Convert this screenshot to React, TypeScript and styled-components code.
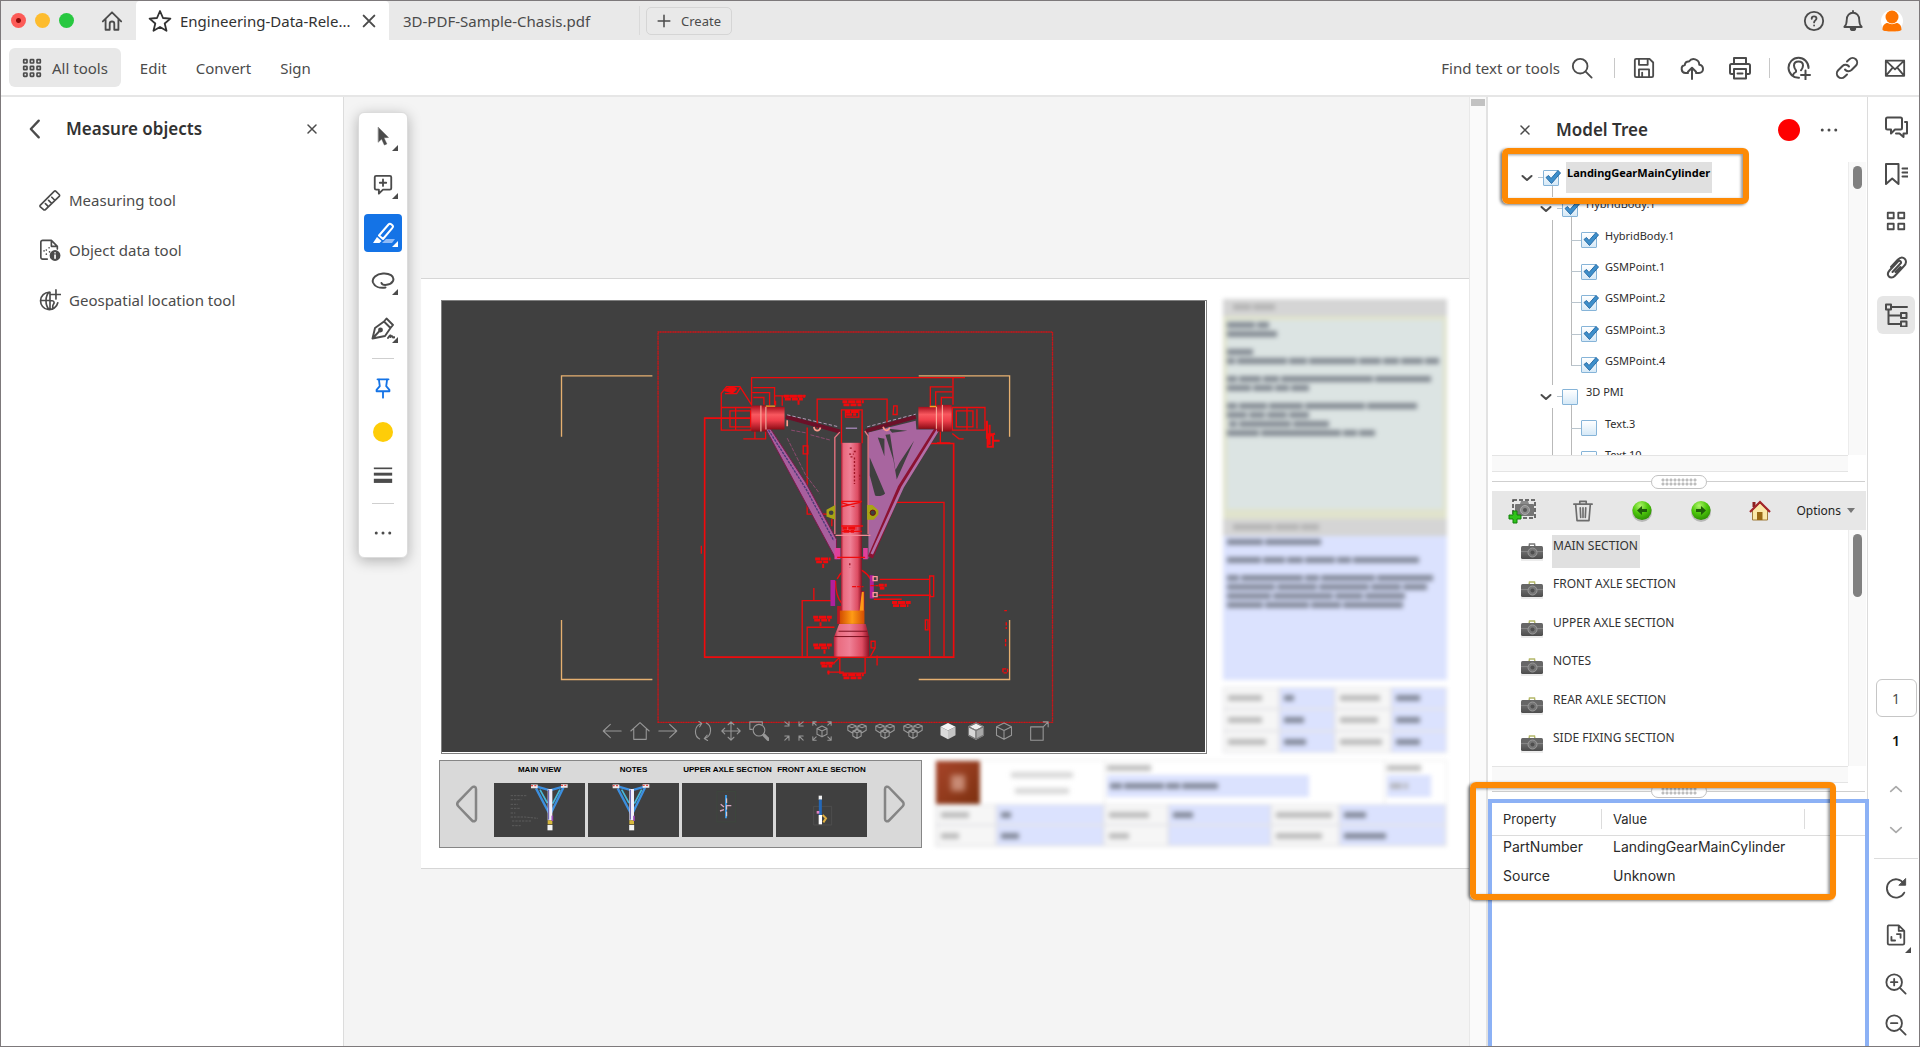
import React from "react";
import styled, { createGlobalStyle, css } from "styled-components";

const Global = createGlobalStyle`
  *, *::before, *::after { box-sizing: border-box; }
  body { margin: 0; font-family: "Noto Sans", "Open Sans", sans-serif; font-size: 15px; line-height: 20px; color: #4b4b4b; }
  button, input { font: inherit; color: inherit; }
  button { background: none; border: 0; padding: 0; cursor: pointer; }
  ul { list-style: none; margin: 0; padding: 0; }
  h2 { margin: 0; }
`;

/* ---------- icons ---------- */

type GlyphProps = { size?: number; sw?: number; box?: number; children: React.ReactNode };

const GlyphSvg = styled.svg`
  display: block;
  flex: none;
  fill: none;
  stroke: currentColor;
  stroke-linecap: round;
  stroke-linejoin: round;
`;

const Glyph = ({ size = 22, sw = 2, box = 24, children }: GlyphProps) => (
  <GlyphSvg width={size} height={size} viewBox={`0 0 ${box} ${box}`} strokeWidth={sw} aria-hidden="true">
    {children}
  </GlyphSvg>
);

const HomeIcon = () => (
  <Glyph size={22}><path d="M2 12.5 12 2.5l10 10M5 10v11.5h4.5V15a2.5 2.5 0 0 1 5 0v6.5H19V10" /></Glyph>
);
const StarIcon = () => (
  <Glyph size={24} sw={1.8}><path d="m12 2 3 7 7.4.6-5.7 4.9 1.8 7.3L12 17.9l-6.5 3.9 1.8-7.3L1.6 9.6 9 9z" /></Glyph>
);
const CrossIcon = ({ size = 16, sw = 3 }: { size?: number; sw?: number }) => (
  <Glyph size={size} sw={sw}><path d="M4 4l16 16M20 4 4 20" /></Glyph>
);
const PlusIcon = () => <Glyph size={14} sw={2.6}><path d="M12 2v20M2 12h20" /></Glyph>;
const HelpIcon = () => (
  <Glyph size={22}><circle cx="12" cy="12" r="10" /><path d="M9.5 9.5c0-1.5 1-2.5 2.6-2.5s2.6 1 2.6 2.3c0 2-2.6 2-2.6 4.2" /><path d="M12.1 16.8v.2" /></Glyph>
);
const BellIcon = () => (
  <Glyph size={22}><path d="M2.5 18.5h19c-2.5-2.5-2.7-4-2.7-8 0-4.5-3-7.500-6.800-7.500s-6.800 3-6.800 7.500c0 4-.2 5.500-2.700 8zM12 1v2" /><path d="M9.500 19.500a2.500 2.500 0 0 0 5 0z" fill="currentColor" /></Glyph>
);
const AvatarIcon = () => (
  <GlyphSvg width="22" height="22" viewBox="0 0 22 22" aria-hidden="true">
    <circle cx="11" cy="11" r="11" fill="#fff" stroke="none" />
    <circle cx="11" cy="7" r="6.5" fill="#fd7400" stroke="none" />
    <path d="M1.5 20c0-5 2.5-7 5-7 2.500 1.500 6.500 1.500 9 0 2.500 0 5 2 5 7-2 2-17 2-19 0z" fill="#fd7400" stroke="none" />
  </GlyphSvg>
);
const GridDots = () => (
  <Glyph size={20} sw={2}>
    {[2, 10, 18].map((y) => [2, 10, 18].map((x) => <rect key={`${x}-${y}`} x={x} y={y} width="4" height="4" rx=".6" />))}
  </Glyph>
);
const SearchIcon = () => <Glyph size={22}><circle cx="10" cy="10" r="8" /><path d="m16 16 6.5 6.5" /></Glyph>;
const SaveIcon = () => (
  <Glyph size={22}><path d="M2 3.5A1.5 1.5 0 0 1 3.5 2H18l4 4v14.500a1.500 1.500 0 0 1-1.500 1.500h-17A1.500 1.500 0 0 1 2 20.500zM6.500 2v6.500H16V2M6.500 22v-8.500h11V22M10 17v4" /></Glyph>
);
const CloudIcon = () => (
  <Glyph size={24}><path d="M8 17H5.500a4 4 0 0 1-.7-7.900C4.800 6.500 7 5 9 5.500a5.700 5.700 0 0 1 10.300 3.200C21.500 9 23 10.800 23 13s-1.700 4-4 4h-3M12 23V12m-4 3.800 4-4 4 4" /></Glyph>
);
const PrintIcon = () => (
  <Glyph size={24}><path d="M6 8V2h12v6M6 18H3.500A1.500 1.500 0 0 1 2 16.500v-7A1.500 1.500 0 0 1 3.500 8h17A1.500 1.500 0 0 1 22 9.500v7a1.500 1.500 0 0 1-1.500 1.500H18M6 13h12v9.500H6zM9.500 17.500h5" /></Glyph>
);
const AddUserIcon = () => (
  <Glyph size={24}><path d="M21.500 12A10 10 0 1 0 12 21.800M6 19c.5-2 1.500-2.500 3-3.200v-1.500C7.500 12.500 7 11 7 9.500 7 7 8.800 5.500 11.500 5.500S16 7 16 9.500c0 1.500-.5 3-2 4.800M18.500 14.500v9M14 19h9" /></Glyph>
);
const LinkIcon = () => (
  <Glyph size={24}><path d="M10 13.500a4.500 4.500 0 0 0 6.500.5l4.300-4.300a4.500 4.500 0 0 0-6.400-6.400L12 5.500M14 10.500a4.500 4.500 0 0 0-6.500-.5l-4.300 4.300a4.500 4.500 0 0 0 6.400 6.400L12 18.500" /></Glyph>
);
const MailIcon = () => (
  <Glyph size={22}><path d="M2 4h20v16.500H2zM2 4l10 9.500L22 4M2 20.500l7.500-9M22 20.500l-7.500-9" /></Glyph>
);
const BackIcon = () => <Glyph size={20} sw={2.8}><path d="M16.500 2 7 12l9.500 10" /></Glyph>;
const RulerIcon = () => (
  <Glyph size={22} sw={1.8}><path d="M1.500 17.500 16.500 2.500a1.500 1.500 0 0 1 2 0l3.500 3.500a1.500 1.500 0 0 1 0 2L7 22.500c-.5.5-1.500.5-2 0L1.500 19.500a1.500 1.500 0 0 1 0-2zM7 16l3 3M10.500 12.500l3 3M14 9l3 3" /></Glyph>
);
const ObjectDataIcon = () => (
  <Glyph size={22} sw={1.8}>
    <path d="M9 22H4a2 2 0 0 1-2-2V3.500a2 2 0 0 1 2-2h9.500L20 8v3M13.500 1.500V8H20M8 12v.1M11 9.500v.1M5.500 13v.1M8 16.500v.1M11.500 14v.1" />
    <circle cx="17.5" cy="18" r="5" fill="currentColor" /><path d="M17.500 17.500v3.500M17.500 15v.1" stroke="#fff" />
  </Glyph>
);
const GeoIcon = () => (
  <Glyph size={22} sw={1.8}><path d="M11 3.500A9.500 9.500 0 1 0 20.500 15M11 3.500C6.500 8 6.500 17.500 11 22.500M12 3.500v19M2 12.500h10c4 0 4.500 1 4.500 2.500-.5 2-1.500 2-1.500 4v3M18.500 1v10M13.500 6h10" /></Glyph>
);
const CornerMark = styled.span`
  position: absolute;
  right: 4px;
  bottom: 5px;
  border-left: 6px solid transparent;
  border-bottom: 6px solid currentColor;
`;
const PointerIcon = () => (
  <Glyph size={22} sw={0.5}><path d="M7 1.500 18 12.500l-5 .4 3.200 6.600-2.700 1.300-3-6.600L7 17.500z" fill="currentColor" /></Glyph>
);
const CommentAddIcon = () => (
  <Glyph size={22}><path d="M4.500 2h15A1.500 1.500 0 0 1 21 3.500v12a1.500 1.500 0 0 1-1.500 1.500H12l-4.500 4.500V17h-3A1.500 1.500 0 0 1 3 15.500v-12A1.500 1.500 0 0 1 4.500 2zM12 6v7M8.500 9.500h7" /></Glyph>
);
const HighlightIcon = () => (
  <Glyph size={24}>
    <path d="M15 18h9l-3 4H11z" fill="#8fbbf7" stroke="none" />
    <path d="m8 14.500 9.500-11c1-1 2-.8 3 0l.8.7c.8.8.8 2-.1 2.900L12 18zM8 14.500 12 18" />
    <path d="m6 16 4.500 4-2 2H2z" fill="currentColor" stroke="none" />
  </Glyph>
);
const LassoIcon = () => (
  <Glyph size={24}><path d="M10.500 14c1 3 9 2.500 11.500-2 2-5-4-8-10-7.500-6.500.5-11.500 4.500-10 9 1.500 4 6.500 6 12.500 5" /></Glyph>
);
const PenIcon = () => (
  <Glyph size={24} sw={1.9}><path d="M1.500 21.500 4 11l9-6.500 6.500 6.500L14 19l-12.500 2.500zM13 4.500l2.500-3L22 8l-2.500 3M1.500 21.500l7-7.500M17 21c2-3 3-3.500 2.500-1 1.500-1.500 2-1 2.500.5l2-.3" /><circle cx="9.5" cy="13" r="1.5" fill="currentColor" /></Glyph>
);
const PinIcon = () => (
  <Glyph size={22}><path d="M6 2.500h12M7.500 2.500l1 7.500L5 14v1.500h14V14l-3.500-4 1-7.500M12 15.500v7" /></Glyph>
);
const LinesIcon = () => (
  <Glyph size={20}><path d="M1 4h22" strokeWidth="2" strokeLinecap="butt" /><path d="M1 11h22" strokeWidth="3.5" strokeLinecap="butt" /><path d="M1 19h22" strokeWidth="5" strokeLinecap="butt" /></Glyph>
);
const DotsIcon = ({ size = 18 }: { size?: number }) => (
  <Glyph size={size} sw={0}><g fill="currentColor"><circle cx="3" cy="12" r="2" /><circle cx="12" cy="12" r="2" /><circle cx="21" cy="12" r="2" /></g></Glyph>
);
const CommentsIcon = () => (
  <Glyph size={24}><path d="M3.500 2.500h13A1.500 1.500 0 0 1 18 4v9a1.500 1.500 0 0 1-1.500 1.500H11l-4 4v-4H3.500A1.500 1.500 0 0 1 2 13V4a1.500 1.500 0 0 1 1.500-1.500zM21 7h2v11.500h-3.500V22l-4-3.500H12" /></Glyph>
);
const BookmarkIcon = () => (
  <Glyph size={24}><path d="M2 2h12.500v20L8.200 16.500 2 22zM18.500 6.500h5M18.500 10.500h5M18.500 14.500h5" /></Glyph>
);
const TilesIcon = () => (
  <Glyph size={22}><path d="M3 3h6.500v6H3zM14.500 3H21v6h-6.500zM3 15h6.500v6H3zM14.500 15H21v6h-6.500z" /></Glyph>
);
const ClipIcon = () => (
  <Glyph size={24}><path d="m8.500 16 8-8.500a1.500 1.500 0 0 0-2.300-2.200L5.500 14.500c-2 2.300-2 4.500-.6 6s3.900 1.500 5.800-.5l9.300-10c2.500-2.600 2.500-5.500.7-7.200s-4.600-1.500-7 1L7 11M11.500 16l5-5" /></Glyph>
);
const TreeIcon = () => (
  <Glyph size={24}><path d="M2 1.500h5v5H2zM7 4h16M4.500 6.500V21H17M4.500 12.500H17M17 10h5.500v5H17zM17 18.500h5.500v5H17z" /></Glyph>
);
const ChevronIcon = ({ up, size = 16, sw = 3 }: { up?: boolean; size?: number; sw?: number }) => (
  <Glyph size={size} sw={sw}><path d={up ? "m3 16 9-8 9 8" : "m3 8 9 8 9-8"} /></Glyph>
);
const RotateIcon = () => (
  <Glyph size={22}><path d="M21 17A10 10 0 1 1 20.500 7" /><path d="M22.500 2v7h-7z" fill="currentColor" strokeWidth="1" /></Glyph>
);
const FitPageIcon = () => (
  <Glyph size={22}><path d="M4 1.500h11l6 6V21a1.500 1.500 0 0 1-1.500 1.500h-15A1.500 1.500 0 0 1 3 21V3a1.500 1.500 0 0 1 1-1.500zM15 1.500v6h6M13 11h4v4M11 18H7v-4" /></Glyph>
);
const ZoomIcon = ({ plus }: { plus?: boolean }) => (
  <Glyph size={22}><circle cx="10" cy="10" r="8.5" /><path d={plus ? "M10 6.500v7M6.500 10h7M16.500 16.500l6 6" : "M6.500 10h7M16.500 16.500l6 6"} /></Glyph>
);

/* ---------- window ---------- */

const Window = styled.div`
  display: flex;
  flex-direction: column;
  height: 100vh;
  border: 1px solid #7d797b;
  background: #fff;
  overflow: hidden;
`;

const TitleBar = styled.header`
  display: flex;
  align-items: stretch;
  height: 39px;
  flex: none;
  padding-right: 8px;
  background: #e9e9e9;
`;
const Lights = styled.div`
  display: flex;
  align-items: center;
  gap: 9px;
  padding-left: 10px;
`;
const Light = styled.button<{ $color: string; $dot?: boolean }>`
  width: 15px;
  height: 15px;
  border-radius: 50%;
  background: ${(p) => (p.$dot ? `radial-gradient(circle, #8c0a08 2px, ${p.$color} 3px)` : p.$color)};
`;
const IconButton = styled.button<{ $w?: number; $h?: number; $active?: boolean; $color?: string }>`
  position: relative;
  display: flex;
  align-items: center;
  justify-content: center;
  flex: none;
  width: ${(p) => p.$w ?? 38}px;
  height: ${(p) => p.$h ?? 38}px;
  border-radius: 6px;
  color: ${(p) => p.$color ?? "#4b4b4b"};
  background: ${(p) => (p.$active ? "#e6e6e6" : "transparent")};
`;
const HomeSlot = styled.div`
  display: flex;
  align-items: center;
  justify-content: center;
  width: 62px;
  padding-left: 14px;
`;
const Tab = styled.div<{ $active?: boolean }>`
  display: flex;
  align-items: center;
  gap: 8px;
  width: ${(p) => (p.$active ? 253 : 250)}px;
  padding: 0 10px 0 ${(p) => (p.$active ? 12 : 14)}px;
  white-space: nowrap;
  ${(p) => p.$active && css`background: #fff; color: #323232; border-radius: 4px 4px 0 0;`}
`;
const TabName = styled.span`
  flex: 1;
  overflow: hidden;
`;
const CreateSlot = styled.div`
  display: flex;
  align-items: center;
  margin: 5px 0;
  padding-left: 6px;
  border-left: 1px solid #dadada;
`;
const CreateButton = styled.button`
  display: flex;
  align-items: center;
  gap: 10px;
  height: 28px;
  padding: 0 10px;
  border: 1px solid #d5d5d5;
  border-radius: 5px;
  font-size: 13px;
`;
const Push = styled.div`
  display: flex;
  align-items: center;
  margin-left: auto;
`;

const ToolBar = styled.nav`
  display: flex;
  align-items: center;
  gap: 9px;
  flex: none;
  height: 57px;
  padding: 0 0 0 8px;
  border-bottom: 2px solid #e6e6e6;
`;
const MenuButton = styled.button<{ $active?: boolean }>`
  display: flex;
  align-items: center;
  gap: 10px;
  height: 39px;
  padding: 0 ${(p) => (p.$active ? 13 : 10)}px;
  border-radius: 6px;
  background: ${(p) => (p.$active ? "#e8e8e8" : "transparent")};
`;
const Bar = styled.span`
  width: 1px;
  height: 20px;
  margin: 0 5px;
  background: #c8c8c8;
`;
const FindButton = styled.button`
  display: flex;
  align-items: center;
  gap: 11px;
  margin-right: 16px;
`;

const Body = styled.div`
  display: flex;
  flex: 1;
  min-height: 0;
`;

/* ---------- left panel ---------- */

const LeftPanel = styled.aside`
  width: 343px;
  flex: none;
  border-right: 1px solid #dcdcdc;
`;
const LeftHead = styled.div`
  display: flex;
  align-items: center;
  height: 64px;
  padding: 0 12px 0 14px;
`;
const PanelTitle = styled.h2`
  flex: 1;
  padding-left: 11px;
  font-size: 17px;
  line-height: 22px;
  font-weight: 600;
  color: #323232;
`;
const ToolList = styled.ul`
  display: flex;
  flex-direction: column;
  padding: 14px 38px;
`;
const ToolButton = styled.button`
  display: flex;
  align-items: center;
  gap: 8px;
  height: 50px;
`;

/* ---------- canvas ---------- */

const Canvas = styled.main`
  position: relative;
  display: flex;
  align-items: center;
  flex: 1;
  min-width: 0;
  padding: 4px 0 0 77px;
  background: #f4f4f4;
`;
const Palette = styled.div`
  position: absolute;
  z-index: 2;
  left: 14px;
  top: 15px;
  display: flex;
  flex-direction: column;
  align-items: center;
  width: 50px;
  border: 1px solid #dcdcdc;
  border-radius: 6px;
  background: #fff;
  box-shadow: 0 3px 14px rgba(0, 0, 0, 0.28);
`;
const PaletteCell = styled.div<{ $h?: number }>`
  display: flex;
  align-items: center;
  height: ${(p) => p.$h ?? 48}px;
`;
const PaletteButton = styled(IconButton)<{ $on?: boolean }>`
  border-radius: 4px;
  ${(p) => p.$on && css`background: #1473e6; color: #fff;`}
`;
const PaletteRule = styled.hr`
  width: 22px;
  height: 1px;
  margin: 5px 0;
  border: 0;
  background: #cfcfcf;
`;
const Swatch = styled.span<{ $color: string; $size: number }>`
  width: ${(p) => p.$size}px;
  height: ${(p) => p.$size}px;
  border-radius: 50%;
  background: ${(p) => p.$color};
`;

const Sheet = styled.article`
  flex: 1;
  min-width: 0;
  padding: 21px 22px 20px 18px;
  border: 1px solid #d6d6d6;
  border-width: 1px 0;
  background: #fff;
`;
const SheetTop = styled.div`
  display: flex;
  gap: 16px;
  padding-left: 2px;
`;
const SheetBottom = styled.div`
  display: flex;
  align-items: flex-start;
  gap: 13px;
  margin-top: 6px;
`;
const Viewer = styled.section`
  position: relative;
  flex: 1;
  min-width: 0;
  border: 1px solid #808080;
  padding: 0 1px 1px 0;
  background: #fff;
`;
const Scene = styled.svg`
  display: block;
  width: 100%;
  height: auto;
  background: #404040;
`;
const ViewerTools = styled.div`
  position: absolute;
  left: 0;
  right: 0;
  bottom: 9px;
  display: flex;
  justify-content: center;
  gap: 7px;
  padding-left: 2px;
  color: #979797;
`;
const ViewerGroup = styled.div`
  display: flex;
`;
const ViewerButton = styled.button`
  display: flex;
  justify-content: center;
  align-items: center;
  width: 28px;
  height: 26px;
`;

const red = "#f00a0c";

const Label = ({ x, y, w = 50 }: { x: number; y: number; w?: number }) => (
  <g stroke={red}>
    <path d={`M${x} ${y}h${w}`} strokeWidth="9" strokeDasharray="15 2 22 2" />
    <path d={`M${x + 3} ${y + 9}h${w - 10}`} strokeWidth="8" strokeDasharray="18 3" />
  </g>
);

const ModelScene = () => (
  <Scene viewBox="-597 -120 2292 1356" role="img" aria-label="Landing gear main cylinder">
    <defs>
      <linearGradient id="tube" x1="0" x2="1">
        <stop offset="0" stopColor="#b81c35" /><stop offset=".12" stopColor="#e96b7f" /><stop offset=".45" stopColor="#ef8096" />
        <stop offset=".8" stopColor="#dd4c62" /><stop offset="1" stopColor="#8e0f22" />
      </linearGradient>
      <linearGradient id="drum" x1="0" x2="0" y1="0" y2="1">
        <stop offset="0" stopColor="#a80f1d" /><stop offset=".35" stopColor="#f9585f" /><stop offset=".6" stopColor="#ee3e4a" /><stop offset="1" stopColor="#8d0c16" />
      </linearGradient>
      <linearGradient id="ring" x1="0" x2="1">
        <stop offset="0" stopColor="#d24c00" /><stop offset=".5" stopColor="#ff9c16" /><stop offset="1" stopColor="#d24c00" />
      </linearGradient>
    </defs>
    <rect x="52" y="-27" width="1185" height="1173" fill="none" stroke="#d01216" strokeWidth="4" strokeDasharray="4 1" />
    <g fill="none" stroke="#e6b070" strokeWidth="4">
      <path d="M35 105H-238V288M35 1017H-238V838M835 105h273v183M835 1017h273V838" />
    </g>
    <g fill="none" stroke={red} strokeWidth="4">
      <path d="M333 195V110h605v82M938 110h36" />
      <path d="M333 232H192V950H940V308H870" strokeWidth="5" />
      <path d="M182 615v24M338 140h64v52M335 155h52v38M338 170h32v22M402 165h94M425 165v30M405 180v14" />
      <path d="M870 195v-57h66M886 195v-42h50M903 195v-25h34M870 138h35" />
      <path d="M242 200h90v68h-90zM268 210h62v48h-62zM285 200v68M333 192l-35-55h-40l-16 20v45M300 140l-12 18h-35" />
      <path d="M936 200h98v68h-98zM948 210h50v48h-50zM980 200v68M1010 205v58M1034 200v68M936 278l20 16h14" />
      <path d="M308 294h67v-22M343 272v24M900 272v34M890 306h40" />
      <path d="M530 262v-87h210v70M603 310V207h62v100M615 207v22h40v-22" />
      <path d="M500 260V520h80M488 315h14v24h-14zM760 195h10v26h-12zM685 305h72" />
      <path d="M760 485h151v463M718 716h150v232M714 764h158M868 706h12v62h-12zM700 776h84" />
      <path d="M575 780h-90v168M520 742v38h50M500 948v-88h82M598 950v48h76v-48" />
      <path d="M590 715c10-20 26-34 46-34s44 14 54 34M585 720c0 30 6 54 20 70M540 968h40l20-20M710 945v30M560 995h50" />
      <path d="M574 535v22M855 838h8v30h-8zM692 902h12v20h-12zM704 922l-14 26" />
      <path d="M1040 240v50l24-12M1048 252v60M1060 300h18M1042 280h16v38h-16z" strokeWidth="6" />
      <path d="M1092 810h8M1098 845v20M1096 895v22M1088 985h14v12h-14z" strokeDasharray="10 4" />
    </g>
    <path d="M250 150c8-14 30-16 40-6l-14 14z" fill={red} />
    <Label x={606} y={183} w={64} /><Label x={614} y={212} w={40} /><Label x={430} y={166} w={64} />
    <Label x={524} y={655} w={46} /><Label x={518} y={830} w={58} /><Label x={518} y={913} w={56} />
    <Label x={540} y={968} w={42} /><Label x={755} y={786} w={56} /><Label x={606} y={1003} w={64} /><Label x={715} y={734} w={24} />
    <g stroke={red} strokeWidth="6" fill="none"><path d="M474 178v14M548 670v12M540 845v12M552 928v12M564 990v12" /></g>

    {/* left and right braces */}
    <path d="M372 258h14l110 168 92 170v62z" fill="#a85f9e" stroke="#7a1a4a" strokeWidth="3" />
    <path d="M384 268l112 176 84 156" fill="none" stroke="#4c3a78" strokeWidth="4" strokeDasharray="8 3" />
    <path d="M440 292l55 110 42 56M452 268l44 8M510 282l60 16" fill="none" stroke="#8c4a6e" strokeWidth="3" strokeDasharray="12 4" />
    <path d="M684 275 826 240l2 26h58l-14 30L765 470 684 655z" fill="#a8659f" />
    <path d="M688 350l46 108c-8 8-22 10-30 6l-16-60zM735 282l24 76 10 58 52-116-44 66-12 22-16-108zM712 290l20 4v52zM745 264l56 6-46 6z" fill="#404040" />
    <path d="M892 262 780 440 690 650" fill="none" stroke="#8c1232" strokeWidth="16" />
    <path d="M896 262 786 440 694 640" fill="none" stroke="#b070a8" strokeWidth="8" />
    <path d="M436 228l162 44M676 270l150-42" fill="none" stroke="#6b1028" strokeWidth="12" />
    <path d="M440 222l155 36M680 258l146-38" fill="none" stroke="#b49ab8" strokeWidth="3" strokeDasharray="10 6" />
    <path d="M583 580V290l15-16M683 580V285l-10-14" fill="none" stroke="#ea7482" strokeWidth="4" />
    <path d="M440 238v18M520 258c2 14 16 16 20 2M728 258c4 14 16 14 20 2" fill="none" stroke="#ff9a8c" strokeWidth="5" />

    {/* axle drums */}
    <rect x="332" y="194" width="46" height="78" fill="url(#drum)" /><rect x="378" y="198" width="54" height="68" fill="url(#drum)" />
    <path d="M361 194v78M376 198v68" stroke="#ffb8a8" strokeWidth="3" />
    <rect x="834" y="198" width="56" height="66" fill="url(#drum)" /><rect x="890" y="192" width="44" height="80" fill="url(#drum)" />
    <path d="M888 198v66M906 192v80" stroke="#ffb8a8" strokeWidth="3" />
    <path d="M376 196h28M868 197h20" stroke="#ffa020" strokeWidth="4" />

    {/* cylinder */}
    <path d="M584 493l-26 14v20l26 10zM680 493h16l18 16v12l-14 16h-20z" fill="#a8a414" />
    <circle cx="572" cy="516" r="7" fill="#404040" /><circle cx="697" cy="516" r="8" fill="#404040" stroke="#70100c" strokeWidth="3" />
    <path d="M570 718h14v78h-14zM688 704h12v70h-12z" fill="#b0209c" />
    <path d="M582 622h18v34h-18zM668 622h14v34h-14z" fill="#e0409c" />
    <path d="M698 708h12v12h-12zM698 756h12v12h-12z" fill="none" stroke="#ff9a9a" strokeWidth="4" />
    <rect x="602" y="306" width="62" height="506" fill="url(#tube)" />
    <path d="M590 796h12v54h-12zM664 752h8v60h-8z" fill="#b81624" />
    <path d="M664 754h6v70h-14z" fill="#ff9a16" />
    <rect x="598" y="810" width="74" height="40" fill="url(#ring)" />
    <path d="M596 850h80l10 40v58H580v-58z" fill="url(#tube)" />
    <path d="M594 872h86M582 888h104" stroke="#7c1020" strokeWidth="3" />
    <path d="M585 584h105" stroke="#f58a96" strokeWidth="4" />
    <path d="M602 482h62M602 498l60-14M602 486l40 12M590 650h84M602 556h66M604 572h60" fill="none" stroke={red} strokeWidth="4" />
    <Label x={606} y={563} w={42} />
    <path d="M628 322h6M640 332h6M626 340h14M630 348h6M642 350v80M658 402v14M628 668v12" stroke="#a01424" strokeWidth="4" strokeDasharray="6 5" fill="none" />
    <path d="M616 262h34" stroke="#c8a0e0" strokeWidth="3" />
    <path d="M635 738h34M690 735h24" stroke={red} strokeWidth="4" strokeDasharray="12 3" />
  </Scene>
);

const cubePath = "M12 2.5 21 7v10l-9 5-9-5V7zM3 7l9 4.5L21 7M12 11.5V22";
const trioPath = "M1 6l5-2 5 2v5l-5 3-5-3zM1 6l5 2 5-2M13 6l5-2 5 2v5l-5 3-5-3zM13 6l5 2 5-2M7 12l5-2 5 2v6l-5 3-5-3zM7 12l5 2 5-2M12 14v7";

const viewerGroups: [string, React.ReactNode][][] = [
  [
    ["Previous view", <path key="p" d="M23 12H1.5M10 4l-8.5 8 8.5 8" />],
    ["Default view", <path key="p" d="M1 12 12 2l11 10M4.500 10v12h15V10" />],
    ["Next view", <path key="p" d="M1 12h21.5M14 4l8.5 8-8.5 8" />],
  ],
  [
    ["Rotate", <path key="p" d="M8 21.500C1 18 1 6 10 3M16 2.500c7 3.500 7 15.500-2 18.500M7 .5l3.500 2.500L8 7M17 17l-3.500 4 4 2.500" />],
    ["Pan", <path key="p" d="M12 1v22M1 12h22M8.500 4.500 12 1l3.500 3.500M8.500 19.500 12 23l3.500-3.500M4.500 8.500 1 12l3.500 3.500M19.500 8.500 23 12l-3.500 3.500" />],
    ["Zoom area", <g key="p"><path d="M4 10H1V1h15v3" /><circle cx="12" cy="11" r="7" /><path d="m18 17 5 5" strokeWidth="4" /></g>],
  ],
  [
    ["Fit all", <path key="p" d="M1 1l5 4M6 1v5H1M23 1l-5 4M18 1v5h5M1 23l5-5M1 18h5v5M23 23l-5-5M23 18h-5v5" />],
    ["Fit visible", <path key="p" d="M5 5 1 1M1 5V1h4M19 5l4-4M23 5V1h-4M5 19l-4 4M1 19v4h4M19 19l4 4M23 19v4h-4M12 6l6 3v7l-6 3-6-3V9zM6 9l6 3 6-3M12 12v7" />],
  ],
  [
    ["Show parts", <path key="p" d={trioPath} />],
    ["Hide parts", <path key="p" d={trioPath} />],
    ["Isolate parts", <path key="p" d={trioPath} />],
  ],
  [
    ["Solid", <g key="p" stroke="none"><path d="M12 2.500 21 7l-9 4.500L3 7z" fill="#f4f4f4" /><path d="M3 7l9 4.500V22l-9-5z" fill="#dadada" /><path d="M21 7l-9 4.500V22l9-5z" fill="#c4c4c4" /></g>],
    ["Solid outline", <g key="p"><path d="M12 2.500 21 7l-9 4.500L3 7z" fill="#f0f0f0" /><path d="M3 7l9 4.500V22l-9-5z" fill="#d8d8d8" /><path d="M21 7l-9 4.500V22l9-5z" fill="#a8a8a8" /><path d={cubePath} stroke="#777" /></g>],
    ["Wireframe", <path key="p" d={cubePath} />],
  ],
  [["Full screen", <path key="p" d="M2 7h15v16H2zM17 7l6-6M17 1h6v6" />]],
];

const ViewStrip = styled.section`
  display: flex;
  align-items: center;
  justify-content: space-between;
  flex: none;
  width: 483px;
  height: 88px;
  padding: 0 16px;
  border: 1px solid #868686;
  background: #d9d9d9;
`;
const Views = styled.ul`
  display: flex;
  gap: 3px;
  align-self: flex-start;
  padding-top: 2px;
`;
const ViewCard = styled.button`
  display: block;
  width: 91px;
  font: bold 8px/14px "Liberation Sans", Arial, sans-serif;
  color: #000;
  text-align: center;
  white-space: nowrap;
`;
const ViewPicture = styled.svg`
  display: block;
  width: 100%;
  height: 54px;
  margin-top: 6px;
  background: #404040;
`;
const ArrowButton = styled.button`
  display: flex;
  color: #858585;
`;

const MiniGear = ({ x }: { x: number }) => (
  <g transform={`translate(${x} 0)`} fill="none">
    <path d="M-42 16 0 96 40 14M-42 10 0 22l42-12" stroke="#3c8fe0" strokeWidth="7" />
    <path d="M-30 20-8 60M30 20 8 62" stroke="#48b8d8" strokeWidth="5" />
    <path d="M-57 10h20M33 9h20" stroke="#f0eaea" strokeWidth="11" />
    <path d="M-57 8h20M33 7h20" stroke="#e04848" strokeWidth="4" strokeDasharray="6 4" />
    <path d="M0 18v94" stroke="#f2effa" strokeWidth="14" /><path d="M-4 20v90" stroke="#5850a8" strokeWidth="3" />
    <path d="M0 112v12" stroke="#d8b83c" strokeWidth="14" /><path d="M7 98v16" stroke="#9a48b8" strokeWidth="5" />
    <path d="M0 126v16" stroke="#f4f4f4" strokeWidth="15" />
  </g>
);

const views: [string, React.ReactNode][] = [
  ["MAIN VIEW", <g key="v"><MiniGear x={168} /><path d="M50 38h48M50 50h32M50 64h22M50 76h30M50 90h14M50 102h42l40 4M54 114h60M54 128h26" fill="none" stroke="#5c5c5c" strokeWidth="3" strokeDasharray="7 3" /></g>],
  ["NOTES", <MiniGear key="v" x={131} />],
  ["UPPER AXLE SECTION", <g key="v" fill="none"><path d="M105 25h56v92h-56z" stroke="#3c4a3c" strokeWidth="2" /><path d="M132 36v70" stroke="#3c98e0" strokeWidth="6" /><path d="M134 46v60" stroke="#f0d0d0" strokeWidth="3" strokeDasharray="14 6" /><path d="M116 64l10 8M114 84l12-4M134 68h14" stroke="#d8a8c0" strokeWidth="4" /></g>],
  ["FRONT AXLE SECTION", <g key="v" fill="none"><path d="M113 70h54v56h-54z" stroke="#555" strokeWidth="2" /><path d="M133 38v12" stroke="#f0f0f0" strokeWidth="10" /><path d="M133 50v46" stroke="#2468b8" strokeWidth="9" /><path d="M133 96v28" stroke="#fff" strokeWidth="10" /><path d="M140 96l10 10-8 12" stroke="#e0b040" strokeWidth="6" /><path d="M122 88h8" stroke="#e080c0" strokeWidth="8" /></g>],
];

/* Redacted drawing notes: word-sized bars seen through a blur */

const Notes = styled.aside`
  display: flex;
  flex-direction: column;
  width: 224px;
  flex: none;
  margin-top: -1px;
  filter: blur(2px);
`;
const NoteHead = styled.div`
  display: flex;
  align-items: center;
  height: 17px;
  padding-left: 10px;
  background: #d5d5d5;
`;
const NoteBody = styled.div<{ $tone: "green" | "blue" }>`
  display: flex;
  flex-direction: column;
  padding: 2px 4px;
  ${(p) =>
    p.$tone === "green"
      ? css`height: 203px; background: #dce4e3; border: 4px solid #e0e3cd; border-bottom-width: 10px; padding: 1px 0;`
      : css`height: 144px; background: #dbe2fe;`}
`;
const NoteLine = styled.div`
  display: flex;
  align-items: center;
  gap: 2px;
  height: 9px;
`;
const Word = styled.span<{ $w: number; $faint?: boolean }>`
  width: ${(p) => p.$w}px;
  height: 6px;
  background: ${(p) => (p.$faint ? "#a9a9a9" : "#666c78")};
  opacity: 0.75;
  filter: blur(1px);
`;
const Line = ({ words, faint }: { words: number[]; faint?: boolean }) => (
  <NoteLine>{words.map((w, i) => <Word key={i} $w={w} $faint={faint} />)}</NoteLine>
);
const FieldGrid = styled.div`
  display: grid;
  grid-template-columns: 1fr 1fr 1fr 1fr;
  grid-auto-rows: 22px;
  margin-top: 7px;
`;
const Field = styled.div<{ $fill?: boolean }>`
  display: flex;
  align-items: center;
  padding-left: 4px;
  border: 1px solid #e4e4e8;
  background: ${(p) => (p.$fill ? "#dbe2fe" : "#f6f6f6")};
`;
const TitleBlock = styled.div`
  flex: 1;
  min-width: 0;
  border: 1px solid #ececec;
  filter: blur(2px);
`;
const TitleTop = styled.div`
  display: flex;
  height: 43px;
`;
const Badge = styled.div`
  display: flex;
  align-items: center;
  justify-content: center;
  width: 44px;
  height: 44px;
  background: linear-gradient(135deg, #a8452a, #7c300f);
`;
const BadgeMark = styled.span`
  width: 14px;
  height: 16px;
  background: #c98c76;
  filter: blur(2px);
`;
const Brand = styled.div`
  display: flex;
  flex-direction: column;
  align-items: center;
  justify-content: center;
  gap: 10px;
  width: 124px;
  opacity: 0.6;
`;
const TitleCell = styled.div<{ $grow?: boolean; $w?: number }>`
  display: flex;
  flex-direction: column;
  gap: 3px;
  ${(p) => (p.$grow ? "flex: 1;" : `width: ${p.$w}px;`)}
  padding: 2px 0 0 2px;
  border-left: 1px solid #e4e4e4;
`;
const TitleField = styled.div<{ $w: number }>`
  display: flex;
  align-items: center;
  width: ${(p) => p.$w}px;
  height: 22px;
  padding-left: 3px;
  background: #dbe2fe;
`;
const TitleGrid = styled.div`
  display: grid;
  grid-template-columns: 60fr 108fr 64fr 102fr 68fr 107fr;
  grid-auto-rows: 21px;
`;

const PageScroll = styled.div`
  width: 17px;
  flex: none;
  padding: 2px 1px;
  border-left: 1px solid #e8e8e8;
  background: #fafafa;
`;
const PageThumb = styled.div`
  height: 7px;
  background: #c2c2c2;
`;

/* ---------- model tree panel ---------- */

const Panel = styled.aside`
  position: relative;
  display: flex;
  flex-direction: column;
  width: 382px;
  flex: none;
  border-left: 2px solid #e2e2e2;
  border-right: 1px solid #dcdcdc;
`;
const PanelHead = styled.div`
  display: flex;
  align-items: center;
  flex: none;
  height: 65px;
  padding: 0 9px 0 17px;
`;
const ScrollBox = styled.div<{ $h: number }>`
  display: flex;
  flex: none;
  height: ${(p) => p.$h}px;
  margin-left: 4px;
  overflow: hidden;
`;
const TreeRows = styled.ul`
  display: grid;
  grid-auto-rows: 1fr;
  flex: 1;
  height: 313px;
  padding-left: 25px;
`;
const Row = styled.li`
  display: flex;
  align-items: center;
`;
const Guide = styled.span<{ $kind: "none" | "full" | "half" | "gap" }>`
  display: flex;
  align-items: center;
  justify-content: center;
  align-self: stretch;
  width: 19px;
  background-repeat: no-repeat;
  ${(p) =>
    p.$kind === "full" && css`background-image: linear-gradient(#b9b9b9, #b9b9b9); background-size: 1px 100%; background-position: 16px 0;`}
  ${(p) =>
    p.$kind === "half" && css`background-image: linear-gradient(#b9b9b9, #b9b9b9); background-size: 1px 50%; background-position: 16px 0;`}
  ${(p) =>
    p.$kind === "gap" &&
    css`background-image: linear-gradient(#b9b9b9 4px, transparent 4px 27px, #b9b9b9 27px); background-size: 1px 100%; background-position: 16px 0;`}
`;
const Tick = styled.span<{ $long?: boolean }>`
  width: ${(p) => (p.$long ? 10 : 5)}px;
  height: 1px;
  margin-left: ${(p) => (p.$long ? -3 : 2)}px;
  background: #b9c4cc;
`;
const CheckLabel = styled.label<{ $selected?: boolean; $stem?: boolean }>`
  display: flex;
  align-items: center;
  align-self: stretch;
  gap: 7px;
  color: #2c2c2c;
  font-size: 11px;
  line-height: 16px;
  ${(p) => p.$stem && css`background: linear-gradient(#b9b9b9, #b9b9b9) 9px 100% / 1px 25% no-repeat;`}
  ${(p) => p.$selected && css`color: #000; font-weight: 700;`}
`;
const CheckSlot = styled.span`
  position: relative;
  display: flex;
`;
const CheckInput = styled.input`
  appearance: none;
  width: 16px;
  height: 16px;
  margin: 0;
  border: 1px solid #86b4d8;
  border-radius: 1px;
  background: linear-gradient(#fff, #d6e9f7);
`;
const CheckMark = styled.svg`
  position: absolute;
  left: 1px;
  top: -1px;
  pointer-events: none;
`;
const ItemText = styled.span<{ $selected?: boolean; $drop: number }>`
  display: flex;
  align-items: center;
  align-self: stretch;
  padding: 0 2px ${(p) => p.$drop}px 1px;
  background: ${(p) => (p.$selected ? "#e0e0e0" : "transparent")};
`;
const VTrack = styled.div`
  width: 18px;
  flex: none;
  margin-right: 1px;
  padding: 4px;
  border-left: 1px solid #ececec;
  background: #f9f9f9;
`;
const VThumb = styled.div<{ $h: number }>`
  height: ${(p) => p.$h}px;
  border-radius: 5px;
  background: #808080;
`;
const HTrack = styled.div`
  flex: none;
  height: 17px;
  margin: 0 19px 0 4px;
  border: 1px solid #e4e4e4;
  border-width: 1px 0;
  background: #f9f9f9;
`;
const Splitter = styled.div<{ $h: number }>`
  display: flex;
  align-items: center;
  flex: none;
  height: ${(p) => p.$h}px;
  margin: 0 2px 0 4px;
  &::before, &::after { content: ""; flex: 1; height: 1px; background: #cfcfcf; }
`;
const Grip = styled.span`
  display: flex;
  align-items: center;
  justify-content: center;
  width: 56px;
  height: 14px;
  border: 1px solid #c2c2c2;
  border-radius: 7px;
  background: #fff;
  &::before {
    content: "";
    width: 36px;
    height: 8px;
    background: radial-gradient(circle, #bdbdbd 1px, transparent 2px) 0 0 / 4px 4px;
  }
`;
const ViewBar = styled.div`
  display: flex;
  align-items: center;
  flex: none;
  height: 39px;
  margin: 0 1px 0 4px;
  padding: 0 11px 0 1px;
  background: #e7e7e7;
`;
const OptionsButton = styled.button`
  display: flex;
  align-items: center;
  gap: 6px;
  margin-left: auto;
  font-size: 12px;
  color: #222;
  &::after { content: ""; border: 4px solid transparent; border-top: 5px solid #777; border-bottom: 0; }
`;
const SectionRows = styled.ul`
  display: grid;
  grid-auto-rows: 1fr;
  flex: 1;
  padding: 5px 0 0 28px;
`;
const SectionButton = styled.button`
  display: flex;
  align-items: center;
  gap: 8px;
  height: 33px;
  font-size: 12px;
  line-height: 16px;
  color: #333;
`;
const Properties = styled.div`
  position: relative;
  flex: 1;
  margin-right: -2px;
  border: 4px solid #8cb1f5;
  border-bottom: 0;
`;
const PropTable = styled.table`
  width: 100%;
  border-collapse: collapse;
  table-layout: fixed;
  font: 14px/20px Inter, "Liberation Sans", sans-serif;
  color: #2a2a2a;
  td { padding: 0 0 6px 11px; height: 29px; }
`;
const HeadCell = styled.th<{ $w?: number }>`
  height: 32px;
  width: ${(p) => (p.$w ? `${p.$w}px` : "auto")};
  padding: 0;
  border-bottom: 1px solid #dcdcdc;
  font-weight: 400;
  font-size: 13px;
  text-align: left;
`;
const HeadText = styled.span`
  display: block;
  padding-left: 11px;
  border-right: 1px solid #dcdcdc;
`;
const Callout = styled.div<{ $x: number; $y: number; $w: number; $h: number }>`
  position: absolute;
  z-index: 3;
  left: ${(p) => p.$x}px;
  top: ${(p) => p.$y}px;
  width: ${(p) => p.$w}px;
  height: ${(p) => p.$h}px;
  border: 6px solid #fd8a05;
  border-radius: 6px;
  box-shadow: -2px 1px 3px rgba(0, 0, 0, 0.5), inset -2px 1px 3px rgba(0, 0, 0, 0.4);
  pointer-events: none;
`;

const CameraIcon = ({ bare }: { bare?: boolean }) => (
  <svg width="24" height="18" viewBox="0 0 24 18" aria-hidden="true">
    <defs>
      <linearGradient id="cam" x1="0" x2="0" y1="0" y2="1"><stop offset="0" stopColor={bare ? "#666" : "#999"} /><stop offset=".5" stopColor="#686868" /><stop offset="1" stopColor="#4c4c4c" /></linearGradient>
    </defs>
    <path d="M9 4 9.500 1h5l.5 3" fill="none" stroke={bare ? "#777" : "#b4b86a"} strokeWidth="1.5" />
    <rect x="1" y="3" width="22" height="13" rx="1.5" fill="url(#cam)" />
    <rect x="1" y="8" width="22" height="1" fill="#858585" />
    <circle cx="12.5" cy="9.5" r="4.5" fill="#777" stroke="#999" /><circle cx="12.5" cy="9.500" r="2" fill="#4f4f4f" />
    <path d="M1 17h22" stroke="#000" strokeOpacity=".15" />
  </svg>
);
const AddViewIcon = () => (
  <svg width="30" height="26" viewBox="0 0 30 26" aria-hidden="true">
    <rect x="5" y="2" width="22" height="18" fill="none" stroke="#444" strokeWidth="1.5" strokeDasharray="4 2" />
    <rect x="7" y="6" width="19" height="12" rx="1" fill="#757575" /><path d="M12 6l1-3h7l1 3z" fill="#8a8a8a" />
    <circle cx="17" cy="12" r="4.5" fill="#8c8c8c" stroke="#aaa" /><circle cx="17" cy="12" r="2" fill="#555" />
    <path d="M5 13h4v4h4v4H9v4H5v-4H1v-4h4z" fill="#2fc31b" stroke="#13800a" />
  </svg>
);
const TrashIcon = () => (
  <Glyph size={22} sw={1.8}><path d="M2 4.500h20M8.500 4.500V1.500h7v3M4 4.500 5.500 22.500h13L20 4.500M9 8.500l.5 10.500M12 8.500V19M15 8.500 14.500 19" /></Glyph>
);
const GreenArrow = ({ next }: { next?: boolean }) => (
  <svg width="22" height="22" viewBox="0 0 22 22" aria-hidden="true">
    <defs><radialGradient id="grn" cx=".4" cy=".25" r=".8"><stop offset="0" stopColor="#b0f56a" /><stop offset=".5" stopColor="#4ec80c" /><stop offset="1" stopColor="#2a8a04" /></radialGradient></defs>
    <circle cx="11" cy="12" r="10" fill="#000" fillOpacity=".2" /><circle cx="11" cy="10.5" r="9.5" fill="url(#grn)" />
    <path d={next ? "M16 10.5 11 6v3H6v3h5v3z" : "M6 10.5 11 6v3h5v3h-5v3z"} fill="#1f5e0a" />
  </svg>
);
const HouseIcon = () => (
  <svg width="22" height="22" viewBox="0 0 22 22" aria-hidden="true">
    <path d="M3.500 10 11 3l7.500 7v10h-15z" fill="#fbe8a8" stroke="#a07c3c" />
    <rect x="8" y="12" width="5.5" height="8" fill="#9a6a14" />
    <path d="M3.500 2h3v5h-3z" fill="#8c2020" /><path d="M1 12 11 2l10 10" fill="none" stroke="#a3262a" strokeWidth="2.2" />
  </svg>
);

type Kind = "none" | "full" | "half" | "gap";
type Node = { name: string; guides: Kind[]; open?: boolean; checked?: boolean; selected?: boolean };
const nodes: Node[] = [
  { name: "LandingGearMainCylinder", guides: ["none"], open: true, checked: true, selected: true },
  { name: "HybridBody.1", guides: ["none", "gap"], open: true, checked: true },
  { name: "HybridBody.1", guides: ["none", "full", "full"], checked: true },
  { name: "GSMPoint.1", guides: ["none", "full", "full"], checked: true },
  { name: "GSMPoint.2", guides: ["none", "full", "full"], checked: true },
  { name: "GSMPoint.3", guides: ["none", "full", "full"], checked: true },
  { name: "GSMPoint.4", guides: ["none", "full", "half"], checked: true },
  { name: "3D PMI", guides: ["none", "gap"], open: true },
  { name: "Text.3", guides: ["none", "full", "full"] },
  { name: "Text.10", guides: ["none", "full", "full"] },
];
const sections = ["MAIN SECTION", "FRONT AXLE SECTION", "UPPER AXLE SECTION", "NOTES", "REAR AXLE SECTION", "SIDE FIXING SECTION"];

/* ---------- right rail ---------- */

const Rail = styled.nav`
  display: flex;
  flex-direction: column;
  align-items: center;
  width: 51px;
  flex: none;
  padding: 11px 0 1px 5px;
`;
const RailGroup = styled.div<{ $gap?: number }>`
  display: flex;
  flex-direction: column;
  align-items: center;
  gap: ${(p) => p.$gap ?? 0}px;
`;
const RailBottom = styled(RailGroup)`
  margin-top: auto;
  padding-bottom: 5px;
`;
const PageInput = styled.input`
  width: 41px;
  height: 38px;
  border: 1px solid #c6c6c6;
  border-radius: 6px;
  background: #fff;
  font-size: 14px;
  text-align: center;
`;
const PageTotal = styled.span`
  height: 48px;
  font-size: 14px;
  font-weight: 600;
  line-height: 48px;
  color: #111;
`;
const RailRule = styled.hr`
  width: 44px;
  height: 1px;
  margin: 11px 0 5px;
  border: 0;
  background: #dcdcdc;
`;

export default function App() {
  return (
    <Window>
      <Global />
      <TitleBar>
        <Lights>
          <Light $color="#fc5b57" $dot aria-label="Close window" />
          <Light $color="#fdbc2e" aria-label="Minimize window" />
          <Light $color="#28c840" aria-label="Zoom window" />
        </Lights>
        <HomeSlot><IconButton $w={30} $h={30} aria-label="Home"><HomeIcon /></IconButton></HomeSlot>
        <Tab $active>
          <StarIcon />
          <TabName>Engineering-Data-Rele...</TabName>
          <IconButton $w={20} $h={20} aria-label="Close tab"><CrossIcon /></IconButton>
        </Tab>
        <Tab><TabName>3D-PDF-Sample-Chasis.pdf</TabName></Tab>
        <CreateSlot><CreateButton><PlusIcon />Create</CreateButton></CreateSlot>
        <Push>
          <IconButton $w={39} aria-label="Help"><HelpIcon /></IconButton>
          <IconButton $w={39} aria-label="Notifications"><BellIcon /></IconButton>
          <IconButton $w={39} aria-label="Account"><AvatarIcon /></IconButton>
        </Push>
      </TitleBar>

      <ToolBar>
        <MenuButton $active><GridDots />All tools</MenuButton>
        <MenuButton>Edit</MenuButton>
        <MenuButton>Convert</MenuButton>
        <MenuButton>Sign</MenuButton>
        <Push>
          <FindButton>Find text or tools<SearchIcon /></FindButton>
          <Bar />
          <IconButton $w={48} aria-label="Save"><SaveIcon /></IconButton>
          <IconButton $w={48} aria-label="Upload"><CloudIcon /></IconButton>
          <IconButton $w={48} aria-label="Print"><PrintIcon /></IconButton>
          <Bar />
          <IconButton $w={48} aria-label="Share with people"><AddUserIcon /></IconButton>
          <IconButton $w={48} aria-label="Copy link"><LinkIcon /></IconButton>
          <IconButton $w={48} aria-label="Email"><MailIcon /></IconButton>
        </Push>
      </ToolBar>

      <Body>
        <LeftPanel>
          <LeftHead>
            <IconButton $w={40} aria-label="Back"><BackIcon /></IconButton>
            <PanelTitle>Measure objects</PanelTitle>
            <IconButton aria-label="Close panel"><CrossIcon size={12} /></IconButton>
          </LeftHead>
          <ToolList>
            <li><ToolButton><RulerIcon />Measuring tool</ToolButton></li>
            <li><ToolButton><ObjectDataIcon />Object data tool</ToolButton></li>
            <li><ToolButton><GeoIcon />Geospatial location tool</ToolButton></li>
          </ToolList>
        </LeftPanel>

        <Canvas>
          <Palette role="toolbar" aria-label="Quick tools">
            <PaletteCell><PaletteButton aria-label="Select"><PointerIcon /><CornerMark /></PaletteButton></PaletteCell>
            <PaletteCell><PaletteButton aria-label="Comment"><CommentAddIcon /><CornerMark /></PaletteButton></PaletteCell>
            <PaletteCell><PaletteButton $on aria-label="Highlight"><HighlightIcon /><CornerMark /></PaletteButton></PaletteCell>
            <PaletteCell><PaletteButton aria-label="Draw"><LassoIcon /><CornerMark /></PaletteButton></PaletteCell>
            <PaletteCell><PaletteButton aria-label="Sign"><PenIcon /><CornerMark /></PaletteButton></PaletteCell>
            <PaletteRule />
            <PaletteCell><PaletteButton $color="#1473e6" aria-label="Keep tool selected"><PinIcon /></PaletteButton></PaletteCell>
            <PaletteCell $h={40}><PaletteButton aria-label="Color"><Swatch $color="#fecd08" $size={20} /></PaletteButton></PaletteCell>
            <PaletteCell $h={46}><PaletteButton aria-label="Line thickness"><LinesIcon /></PaletteButton></PaletteCell>
            <PaletteRule />
            <PaletteCell><PaletteButton aria-label="More tools"><DotsIcon /></PaletteButton></PaletteCell>
          </Palette>

          <Sheet>
            <SheetTop>
              <Viewer>
                <ModelScene />
                <ViewerTools>
                  {viewerGroups.map((group, i) => (
                    <ViewerGroup key={i}>
                      {group.map(([name, art]) => (
                        <ViewerButton key={name} aria-label={name}><Glyph size={20} sw={1.3}>{art}</Glyph></ViewerButton>
                      ))}
                    </ViewerGroup>
                  ))}
                </ViewerTools>
              </Viewer>
              <Notes aria-hidden="true">
                <NoteHead><Line words={[18, 22]} faint /></NoteHead>
                <NoteBody $tone="green">
                  <Line words={[28, 12]} /><Line words={[50]} /><Line words={[]} />
                  <Line words={[26]} /><Line words={[8, 50, 18, 48, 22, 16, 22, 14]} /><Line words={[]} />
                  <Line words={[10, 22, 16, 92, 56]} /><Line words={[24, 20, 14, 18]} /><Line words={[]} />
                  <Line words={[10, 28, 34, 60, 50]} /><Line words={[20, 16, 20, 20]} />
                  <Line words={[0, 8, 52, 36]} /><Line words={[32, 80, 14, 16]} />
                </NoteBody>
                <NoteHead><Line words={[40, 24, 18]} faint /></NoteHead>
                <NoteBody $tone="blue">
                  <Line words={[36, 56]} /><Line words={[]} />
                  <Line words={[34, 22, 16, 30, 14, 66]} /><Line words={[]} />
                  <Line words={[12, 62, 14, 54, 56]} /><Line words={[48, 40, 50, 30, 24]} />
                  <Line words={[44, 60, 28, 40]} /><Line words={[36, 44, 30, 60]} />
                </NoteBody>
                <FieldGrid>
                  {[[34, 10, 40, 24], [34, 20, 38, 24], [38, 22, 42, 24]].map((row, r) =>
                    row.map((w, c) => <Field key={`${r}-${c}`} $fill={c % 2 === 1}><Word $w={w} $faint={c % 2 === 0} /></Field>),
                  )}
                </FieldGrid>
              </Notes>
            </SheetTop>

            <SheetBottom>
              <ViewStrip aria-label="Model views">
                <ArrowButton aria-label="Previous views">
                  <GlyphSvg width="22" height="38" viewBox="0 0 22 38" strokeWidth="2.5"><path d="M20 4v30c0 2.5-2.5 3-4 1.5L2.500 21.500c-1.500-1.500-1.500-3.500 0-5L16 2.500C17.500 1 20 1.500 20 4z" /></GlyphSvg>
                </ArrowButton>
                <Views>
                  {views.map(([name, art]) => (
                    <li key={name}>
                      <ViewCard>{name}<ViewPicture viewBox="0 0 273 162" aria-hidden="true">{art}</ViewPicture></ViewCard>
                    </li>
                  ))}
                </Views>
                <ArrowButton aria-label="Next views">
                  <GlyphSvg width="22" height="38" viewBox="0 0 22 38" strokeWidth="2.5"><path d="M2 4v30c0 2.500 2.500 3 4 1.500l13.500-14c1.500-1.500 1.500-3.500 0-5L6 2.500C4.500 1 2 1.500 2 4z" /></GlyphSvg>
                </ArrowButton>
              </ViewStrip>
              <TitleBlock aria-hidden="true">
                <TitleTop>
                  <Badge><BadgeMark /></Badge>
                  <Brand><Word $w={62} $faint /><Word $w={54} $faint /></Brand>
                  <TitleCell $grow><Line words={[44]} faint /><TitleField $w={202}><Line words={[12, 40, 14, 36]} /></TitleField></TitleCell>
                  <TitleCell $w={62}><Line words={[34]} faint /><TitleField $w={44}><Line words={[12, 4]} faint /></TitleField></TitleCell>
                </TitleTop>
                <TitleGrid>
                  {[[28, 10, 40, 20, 56, 22], [18, 18, 20, 0, 46, 42]].map((row, r) =>
                    row.map((w, c) => <Field key={`${r}-${c}`} $fill={c % 2 === 1}><Word $w={w} $faint={c % 2 === 0} /></Field>),
                  )}
                </TitleGrid>
              </TitleBlock>
            </SheetBottom>
          </Sheet>
        </Canvas>
        <PageScroll><PageThumb /></PageScroll>

        <Panel>
          <PanelHead>
            <IconButton $w={40} aria-label="Close model tree"><CrossIcon size={12} /></IconButton>
            <PanelTitle>Model Tree</PanelTitle>
            <Swatch $color="#fe0000" $size={22} />
            <IconButton $w={58} aria-label="Panel options"><DotsIcon /></IconButton>
          </PanelHead>

          <ScrollBox $h={293}>
            <TreeRows>
              {nodes.map((n, i) => (
                <Row key={i}>
                  {n.guides.map((g, k) => (
                    <Guide key={k} $kind={g}>
                      {n.open && k === n.guides.length - 1 && <ChevronIcon size={12} sw={4} />}
                    </Guide>
                  ))}
                  <Tick $long={!n.open} />
                  <CheckLabel $selected={n.selected} $stem={n.open}>
                    <CheckSlot>
                      <CheckInput type="checkbox" defaultChecked={n.checked} />
                      {n.checked && (
                        <CheckMark width="17" height="16" viewBox="0 0 17 16">
                          <path d="M2 8.500 4.500 6.500l2.500 3L14 1.500 16.500 4 7.500 14.500z" fill="#3d8fcb" stroke="#2a6ca6" strokeWidth="1" />
                        </CheckMark>
                      )}
                    </CheckSlot>
                    <ItemText $selected={n.selected} $drop={9}>{n.name}</ItemText>
                  </CheckLabel>
                </Row>
              ))}
            </TreeRows>
            <VTrack><VThumb $h={23} /></VTrack>
          </ScrollBox>
          <HTrack />
          <Splitter $h={19}><Grip /></Splitter>

          <ViewBar>
            <IconButton $w={60} aria-label="Add view"><AddViewIcon /></IconButton>
            <IconButton $w={60} aria-label="Delete view" $color="#6c6c6c"><TrashIcon /></IconButton>
            <IconButton $w={58} aria-label="Previous view"><GreenArrow /></IconButton>
            <IconButton $w={59} aria-label="Next view"><GreenArrow next /></IconButton>
            <IconButton $w={60} aria-label="Default view"><HouseIcon /></IconButton>
            <OptionsButton>Options</OptionsButton>
          </ViewBar>

          <ScrollBox $h={236}>
            <SectionRows>
              {sections.map((s, i) => (
                <li key={s}>
                  <SectionButton>
                    <CameraIcon bare={i === 0} />
                    <ItemText $selected={i === 0} $drop={12}>{s}</ItemText>
                  </SectionButton>
                </li>
              ))}
            </SectionRows>
            <VTrack><VThumb $h={63} /></VTrack>
          </ScrollBox>
          <HTrack />
          <Splitter $h={16}><Grip /></Splitter>

          <Properties>
            <PropTable>
              <thead>
                <tr><HeadCell $w={110}><HeadText>Property</HeadText></HeadCell><HeadCell $w={203}><HeadText>Value</HeadText></HeadCell><HeadCell /></tr>
              </thead>
              <tbody>
                <tr><td>PartNumber</td><td>LandingGearMainCylinder</td><td /></tr>
                <tr><td>Source</td><td>Unknown</td><td /></tr>
              </tbody>
            </PropTable>
          </Properties>

          <Callout $x={14} $y={51} $w={247} $h={56} />
          <Callout $x={-18} $y={685} $w={366} $h={118} />
        </Panel>

        <Rail>
          <RailGroup $gap={9}>
            <IconButton aria-label="Comments"><CommentsIcon /></IconButton>
            <IconButton aria-label="Bookmarks"><BookmarkIcon /></IconButton>
            <IconButton aria-label="Thumbnails"><TilesIcon /></IconButton>
            <IconButton aria-label="Attachments"><ClipIcon /></IconButton>
            <IconButton $active aria-label="Model tree"><TreeIcon /></IconButton>
          </RailGroup>
          <RailBottom>
            <PageInput defaultValue="1" aria-label="Page number" />
            <PageTotal>1</PageTotal>
            <IconButton $h={48} $color="#ababab" aria-label="Previous page"><ChevronIcon up size={14} /></IconButton>
            <IconButton $h={34} $color="#ababab" aria-label="Next page"><ChevronIcon size={14} /></IconButton>
            <RailRule />
            <IconButton $h={47} aria-label="Rotate"><RotateIcon /></IconButton>
            <IconButton $h={47} aria-label="Fit page"><FitPageIcon /><CornerMark /></IconButton>
          </RailBottom>
          <RailGroup>
            <IconButton $h={41} aria-label="Zoom in"><ZoomIcon plus /></IconButton>
            <IconButton $h={41} aria-label="Zoom out"><ZoomIcon /></IconButton>
          </RailGroup>
        </Rail>
      </Body>
    </Window>
  );
}
